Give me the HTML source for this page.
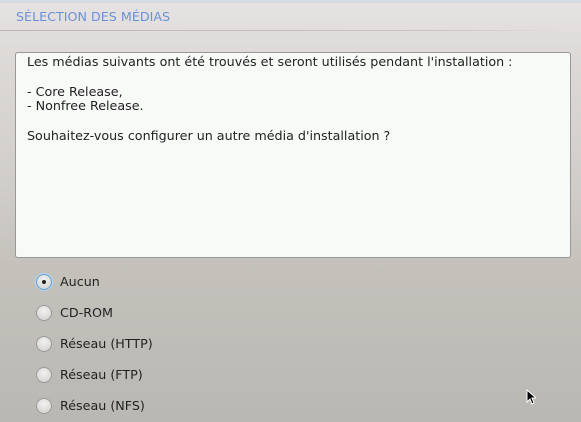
<!DOCTYPE html>
<html><head><style>
body{margin:0;width:581px;height:422px;overflow:hidden;font-family:"DejaVu Sans",sans-serif;font-size:12.7px;color:#222;
background:linear-gradient(180deg,#e6e3e2 0px,#dcd9d7 60px,#cfccc8 200px,#c4c1bb 270px,#b9b8b2 422px);position:relative}
.top{position:absolute;left:0;top:0;width:581px;height:3px;background:#d4dbe4}
.hdr{position:absolute;left:16px;top:9px;color:#6a92d8;font-size:12.7px}
.line{position:absolute;left:0;top:30px;width:560px;height:1px;background:linear-gradient(90deg,#b8b6b4,#c8c6c4 80%,rgba(200,200,200,0))}
.box{position:absolute;left:15px;top:52px;width:554px;height:204px;background:#f8faf8;border:1px solid #9a9896;border-radius:3px}
.box p{margin:0;position:absolute;left:11px;line-height:15px}
.r{position:absolute;left:36px;width:16px;height:16px;border-radius:50%;background:radial-gradient(circle at 50% 35%,#f2f2f0,#d0cecb);border:1px solid #9c9a98;box-sizing:border-box}
.r.on{border-color:#5aa0d8;box-shadow:0 0 0 1px #bcd8ee}
.r.on:after{content:"";position:absolute;left:5px;top:5px;width:4px;height:4px;border-radius:50%;background:#222}
.l{position:absolute;left:60px}
</style></head><body>
<div class="top"></div>
<div class="hdr">SÉLECTION DES MÉDIAS</div>
<div class="line"></div>
<div class="box">
<p style="top:1px">Les médias suivants ont été trouvés et seront utilisés pendant l'installation :</p>
<p style="top:31px">- Core Release,</p>
<p style="top:45px">- Nonfree Release.</p>
<p style="top:75px">Souhaitez-vous configurer un autre média d'installation ?</p>
</div>
<div class="r on" style="top:274px"></div><div class="l" style="top:274px">Aucun</div>
<div class="r" style="top:305px"></div><div class="l" style="top:305px">CD-ROM</div>
<div class="r" style="top:336px"></div><div class="l" style="top:336px">Réseau (HTTP)</div>
<div class="r" style="top:367px"></div><div class="l" style="top:367px">Réseau (FTP)</div>
<div class="r" style="top:398px"></div><div class="l" style="top:398px">Réseau (NFS)</div>
<svg style="position:absolute;left:526px;top:389px" width="10" height="16"><path d="M1 1 L1 13 L4 10 L6 15 L8 14 L6 9 L10 9 Z" fill="#000" stroke="#fff" stroke-width="1"/></svg>
</body></html>
